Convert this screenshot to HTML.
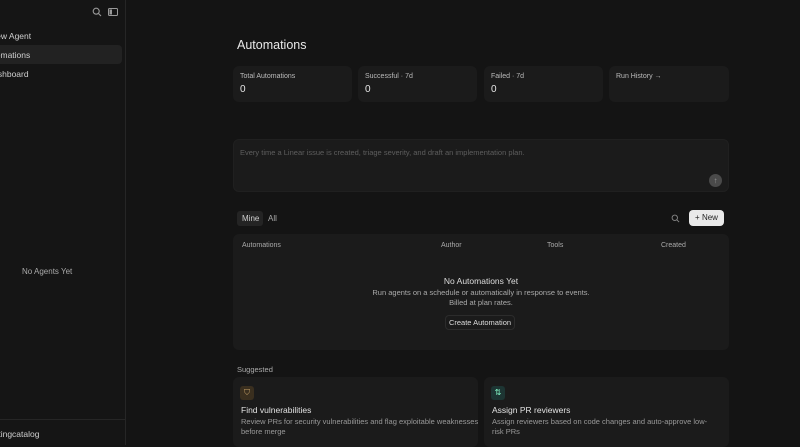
<!DOCTYPE html>
<html><head><style>
*{margin:0;padding:0;box-sizing:border-box}
body{width:800px;height:445px;background:#141414;font-family:"Liberation Sans",sans-serif;color:#e6e6e6;position:relative;overflow:hidden}
.a{position:absolute}
.sb{left:0;top:0;width:126px;height:445px;border-right:1px solid #262626;background:#151515}
.card{background:#1b1b1b;border-radius:6px}
.t{font-size:8px;color:#cfcfcf}
</style></head><body>
<div class="a sb">
 <svg class="a" style="left:92px;top:7px" width="10" height="10" viewBox="0 0 10 10"><circle cx="4.2" cy="4.2" r="3" fill="none" stroke="#999" stroke-width="1.1"/><path d="M6.5 6.5L9 9" stroke="#999" stroke-width="1.1"/></svg>
 <svg class="a" style="left:108px;top:8px" width="10" height="8" viewBox="0 0 10 8"><rect x="0.5" y="0.5" width="9" height="7" rx="1" fill="none" stroke="#999"/><rect x="1.5" y="1.5" width="2.5" height="5" fill="#999"/></svg>
 <div class="a t" style="left:-10px;top:31px;font-size:8.5px">New Agent</div>
 <div class="a" style="left:-4px;top:45px;width:126px;height:19px;background:#222;border-radius:4px"></div>
 <div class="a t" style="left:-17px;top:50px;font-size:8.5px">Automations</div>
 <div class="a t" style="left:-13px;top:69px;font-size:8.5px">Dashboard</div>
 <div class="a" style="left:22px;top:267px;font-size:8px;color:#aaa">No Agents Yet</div>
 <div class="a" style="left:0;top:419px;width:126px;border-top:1px solid #262626"></div>
 <div class="a t" style="left:-13px;top:429px;font-size:8.5px">testingcatalog</div>
</div>
<div class="a" style="left:237px;top:38px;font-size:12.5px;color:#e8e8e8">Automations</div>
<div class="a card" style="left:233px;top:66px;width:119px;height:36px"><div class="a" style="left:7px;top:7px;font-size:7px;color:#bbb">Total Automations</div><div class="a" style="left:7px;top:18px;font-size:10px">0</div></div>
<div class="a card" style="left:358px;top:66px;width:119px;height:36px"><div class="a" style="left:7px;top:7px;font-size:7px;color:#bbb">Successful · 7d</div><div class="a" style="left:7px;top:18px;font-size:10px">0</div></div>
<div class="a card" style="left:484px;top:66px;width:119px;height:36px"><div class="a" style="left:7px;top:7px;font-size:7px;color:#bbb">Failed · 7d</div><div class="a" style="left:7px;top:18px;font-size:10px">0</div></div>
<div class="a card" style="left:609px;top:66px;width:120px;height:36px"><div class="a" style="left:7px;top:7px;font-size:7px;color:#bbb">Run History →</div></div>
<div class="a card" style="left:233px;top:139px;width:496px;height:53px;border:1px solid #202020"><div class="a" style="left:6px;top:8px;font-size:7.5px;color:#5e5e5e">Every time a Linear issue is created, triage severity, and draft an implementation plan.</div>
<div class="a" style="left:475px;top:34px;width:13px;height:13px;border-radius:50%;background:#4a4a4a;color:#999;font-size:8px;text-align:center;line-height:13px">↑</div></div>
<div class="a" style="left:237px;top:211px;width:26px;height:15px;background:#242424;border-radius:3px"></div>
<div class="a t" style="left:242px;top:214px">Mine</div>
<div class="a" style="left:268px;top:214px;font-size:8px;color:#aaa">All</div>
<svg class="a" style="left:671px;top:214px" width="9" height="9" viewBox="0 0 10 10"><circle cx="4.2" cy="4.2" r="3" fill="none" stroke="#888" stroke-width="1"/><path d="M6.5 6.5L9 9" stroke="#888" stroke-width="1"/></svg>
<div class="a" style="left:689px;top:210px;width:35px;height:16px;background:#e9e9e9;border-radius:4px;color:#222;font-size:8px;line-height:16px;text-align:center">+ New</div>
<div class="a card" style="left:233px;top:234px;width:496px;height:116px">
 <div class="a" style="left:9px;top:8px;font-size:7px;color:#aaa">Automations</div>
 <div class="a" style="left:208px;top:8px;font-size:7px;color:#aaa">Author</div>
 <div class="a" style="left:314px;top:8px;font-size:7px;color:#aaa">Tools</div>
 <div class="a" style="left:428px;top:8px;font-size:7px;color:#aaa">Created</div>
 <div class="a" style="left:0;top:42px;width:496px;text-align:center;font-size:8.5px;color:#ddd">No Automations Yet</div>
 <div class="a" style="left:0;top:54px;width:496px;text-align:center;font-size:7.5px;color:#aaa;line-height:9.5px">Run agents on a schedule or automatically in response to events.<br>Billed at plan rates.</div>
 <div class="a" style="left:212px;top:81px;width:70px;height:15px;border:1px solid #2c2c2c;border-radius:4px;font-size:7.5px;color:#ddd;text-align:center;line-height:13px">Create Automation</div>
</div>
<div class="a" style="left:237px;top:365px;font-size:7.5px;color:#aaa">Suggested</div>
<div class="a card" style="left:233px;top:377px;width:245px;height:70px">
 <div class="a" style="left:7px;top:9px;width:14px;height:14px;border-radius:3px;background:#3a2f1f;color:#c9a46a;font-size:8px;text-align:center;line-height:14px">⛉</div>
 <div class="a" style="left:8px;top:28px;font-size:8.5px;color:#e2e2e2">Find vulnerabilities</div>
 <div class="a" style="left:8px;top:40px;font-size:7.5px;color:#999;line-height:9.5px;white-space:nowrap">Review PRs for security vulnerabilities and flag exploitable weaknesses<br>before merge</div>
</div>
<div class="a card" style="left:484px;top:377px;width:245px;height:70px">
 <div class="a" style="left:7px;top:9px;width:14px;height:14px;border-radius:3px;background:#1d3533;color:#8fc;font-size:8px;text-align:center;line-height:14px">⇅</div>
 <div class="a" style="left:8px;top:28px;font-size:8.5px;color:#e2e2e2">Assign PR reviewers</div>
 <div class="a" style="left:8px;top:40px;font-size:7.5px;color:#999;line-height:9.5px;white-space:nowrap">Assign reviewers based on code changes and auto-approve low-<br>risk PRs</div>
</div>
</body></html>
